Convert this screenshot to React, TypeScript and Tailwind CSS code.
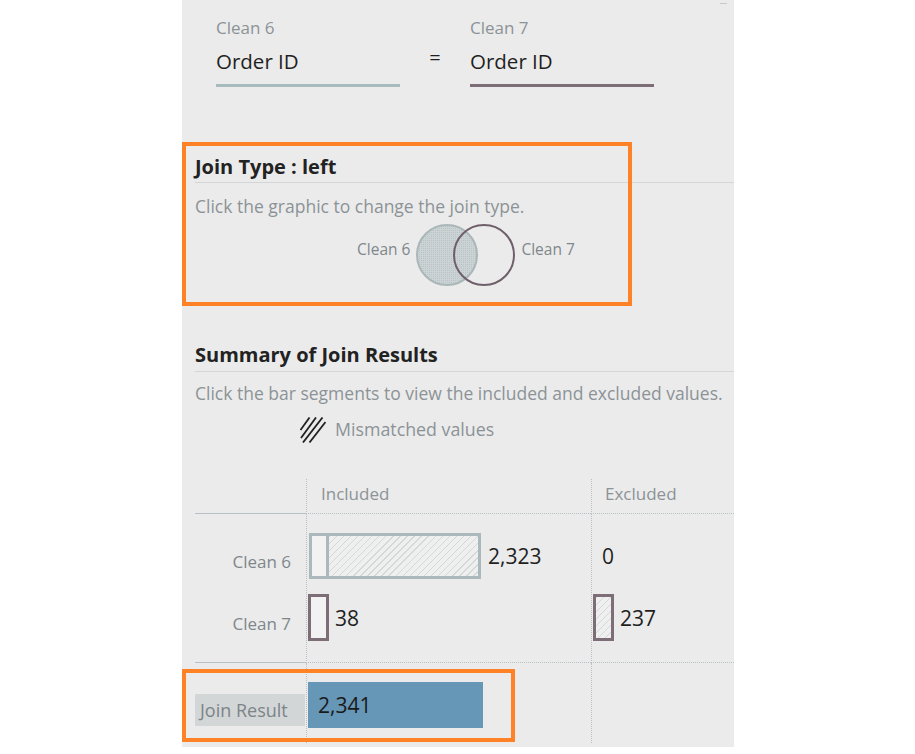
import type { ReactNode } from 'react';

const hatch =
  'bg-[image:repeating-linear-gradient(135deg,#d3d8d9_0px,#d3d8d9_1px,#efefef_1px,#efefef_5px)]';

function HatchIcon() {
  return (
    <svg width="26" height="26" viewBox="0 0 26 26" className="shrink-0">
      <g stroke="#1f1f1f" strokeWidth="1.8" strokeLinecap="butt">
        <line x1="0.5" y1="13" x2="9.5" y2="0.5" />
        <line x1="1" y1="21" x2="16" y2="0.5" />
        <line x1="3" y1="25.5" x2="22.5" y2="0.5" />
        <line x1="9.5" y1="25.5" x2="25.5" y2="5" />
      </g>
    </svg>
  );
}

function Venn() {
  return (
    <svg width="102" height="68" viewBox="0 0 102 68" className="shrink-0">
      <defs>
        <pattern id="dots" width="2" height="2" patternUnits="userSpaceOnUse">
          <rect width="2" height="2" fill="#ccd3d4" />
          <rect width="1" height="1" fill="#b9c3c5" />
        </pattern>
      </defs>
      <circle cx="32" cy="33" r="30" fill="url(#dots)" stroke="#aab7b9" strokeWidth="2" />
      <circle cx="69" cy="33" r="30" fill="none" stroke="#6f5f6a" strokeWidth="2" />
    </svg>
  );
}

function SectionTitle({ children }: { children: ReactNode }) {
  return (
    <h2 className="text-[20px] leading-[24px] font-bold text-[#222]">{children}</h2>
  );
}

function FieldColumn({ table, color }: { table: string; color: string }) {
  return (
    <div className="flex w-[184px] flex-col">
      <div className="text-[17px] leading-[20px] text-[#8b9397]">{table}</div>
      <div className="mt-[10px] text-[20.5px] leading-[26px] text-[#1f1f1f]">Order ID</div>
      <div className={`mt-[10px] h-[3px] ${color}`} />
    </div>
  );
}

const cell2 = 'border-l border-dotted border-[#b9c0c2]';

export default function App() {
  return (
    <div className="min-h-screen bg-white font-['Open_Sans',sans-serif]">
      <div className="relative ml-[182px] h-[747px] w-[552px] bg-[#ebebeb] pl-[13px]">
        <div className="absolute right-[7px] top-[3px] h-px w-[7px] bg-[#c9c9c9]" />

        {/* field mapping */}
        <div className="flex items-end pl-[21px] pt-[18px]">
          <FieldColumn table="Clean 6" color="bg-[#a7babe]" />
          <div className="mb-[16px] w-[70px] text-center text-[20px] leading-[26px] text-[#1f1f1f]">=</div>
          <FieldColumn table="Clean 7" color="bg-[#7c6d77]" />
        </div>

        {/* join type */}
        <div className="mt-[68px]">
          <SectionTitle>Join Type : left</SectionTitle>
          <div className="mt-[3px] h-px bg-[#d3d5d6]" />
          <p className="mt-[12px] text-[17.5px] leading-[22px] text-[#8b9397]">
            Click the graphic to change the join type.
          </p>
          <div className="ml-[162px] mt-[5px] flex items-start">
            <span className="mt-[16px] text-[15.5px] leading-[22px] text-[#7f878b]">Clean 6</span>
            <div className="ml-[5px]">
              <Venn />
            </div>
            <span className="ml-[4px] mt-[16px] text-[15.5px] leading-[22px] text-[#7f878b]">Clean 7</span>
          </div>
        </div>

        {/* summary */}
        <div className="mt-[53px]">
          <SectionTitle>Summary of Join Results</SectionTitle>
          <div className="mt-[4px] h-px bg-[#d3d5d6]" />
          <p className="mt-[10px] text-[17.5px] leading-[22px] text-[#8b9397]">
            Click the bar segments to view the included and excluded values.
          </p>
          <div className="ml-[105px] mt-[13px] flex items-center gap-[9px]">
            <HatchIcon />
            <span className="-mt-[2px] text-[17.8px] leading-[22px] text-[#8b9397]">Mismatched values</span>
          </div>
        </div>

        {/* table */}
        <div className="mt-[36px] grid grid-cols-[111px_285px_143px]">
          {/* header */}
          <div className="h-[35px] border-b border-[#b5c2c5]" />
          <div className={`${cell2} h-[35px] border-b border-b-solid border-b-[#b5c2c5] pl-[14px] pt-[4px] text-[17px] leading-[22px] text-[#8b9397]`}>
            Included
          </div>
          <div className={`${cell2} h-[35px] border-b border-b-solid border-b-[#b5c2c5] pl-[13px] pt-[4px] text-[17px] leading-[22px] text-[#8b9397]`}>
            Excluded
          </div>

          {/* body */}
          <div className="flex flex-col gap-[15px] border-b border-[#b5c2c5] pb-[21px] pr-[15px] pt-[19px] text-[17px] leading-[22px] text-[#80878b]">
            <div className="flex h-[46px] items-end justify-end pb-[6px]">Clean 6</div>
            <div className="flex h-[47px] items-end justify-end pb-[6px]">Clean 7</div>
          </div>
          <div className={`${cell2} flex flex-col gap-[15px] border-b border-b-solid border-b-[#b5c2c5] pb-[21px] pt-[19px] text-[21px] leading-[26px] text-[#1f1f1f]`}>
            <div className="flex h-[46px] items-center">
              <div className="ml-[2px] flex h-full w-[172px] border-[3px] border-[#abb9bc]">
                <div className="w-[14px] bg-[#f2f2f2]" />
                <div className="w-[3px] bg-[#abb9bc]" />
                <div className={`flex-1 ${hatch}`} />
              </div>
              <span className="ml-[7px]">2,323</span>
            </div>
            <div className="flex h-[47px] items-center">
              <div className="ml-[1px] h-full w-[21px] border-[3px] border-[#7c6d77] bg-[#f2f2f2]" />
              <span className="ml-[6px]">38</span>
            </div>
          </div>
          <div className={`${cell2} flex flex-col gap-[15px] border-b border-b-solid border-b-[#b5c2c5] pb-[21px] pt-[19px] text-[21px] leading-[26px] text-[#1f1f1f]`}>
            <div className="flex h-[46px] items-center pl-[10px]">
              <span>0</span>
            </div>
            <div className="flex h-[47px] items-center">
              <div className={`ml-[1px] h-full w-[21px] border-[3px] border-[#7c6d77] ${hatch}`} />
              <span className="ml-[6px]">237</span>
            </div>
          </div>

          {/* result */}
          <div className="h-[84px] pt-[31px]">
            <div className="flex h-[32px] w-[110px] items-center bg-[#d2d6d7] pl-[5px] text-[18px] leading-[22px] text-[#7d8488]">
              Join Result
            </div>
          </div>
          <div className={`${cell2} h-[80px] pt-[19px]`}>
            <div className="ml-[1px] flex h-[46px] w-[175px] items-center bg-[#6697b7] pl-[10px] text-[21px] leading-[26px] text-[#1a1a1a]">
              2,341
            </div>
          </div>
          <div className={`${cell2} h-[80px]`} />
        </div>

        {/* highlight frames */}
        <div className="pointer-events-none absolute left-0 top-[142px] h-[164px] w-[450px] border-4 border-[#ff8227]" />
        <div className="pointer-events-none absolute left-0 top-[669px] h-[73px] w-[333px] border-4 border-[#ff8227]" />
      </div>
    </div>
  );
}
